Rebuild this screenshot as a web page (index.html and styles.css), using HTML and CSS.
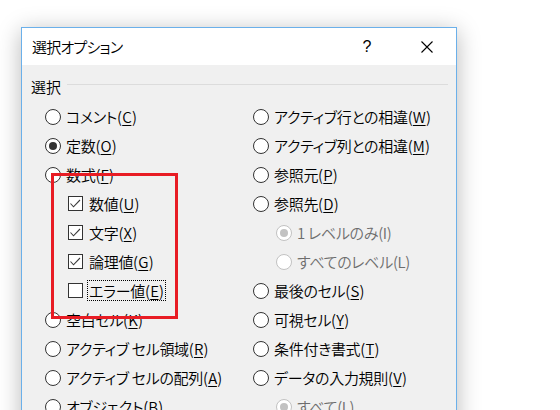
FILE: index.html
```html
<!DOCTYPE html>
<html lang="ja">
<head>
<meta charset="utf-8">
<title>選択オプション</title>
<link rel="stylesheet" href="styles.css">
</head>
<body>
<div class="screen">
  <div class="dialog">
    <div class="titlebar">
      <span class="title">選択オプション</span>
      <span class="help">?</span>
      <span class="close"><svg width="12" height="12" viewBox="0 0 12 12"><path d="M0.5 0.5 L11.5 11.5 M11.5 0.5 L0.5 11.5" stroke="#000" stroke-width="1.1" fill="none"/></svg></span>
    </div>
    <div class="content">
      <div class="group-head"><span class="group-label">選択</span><span class="rule"></span></div>
      <div class="columns">
        <div class="col">
          <div class="row"><span class="radio"></span><span class="label">コメント(<u>C</u>)</span></div>
          <div class="row"><span class="radio on"></span><span class="label">定数(<u>O</u>)</span></div>
          <div class="row"><span class="radio"></span><span class="label">数式(<u>F</u>)</span></div>
          <div class="row sub"><span class="check on"><svg width="13" height="13" viewBox="0 0 13 13"><path d="M1.5 6.5 L4.5 9.8 L11 3" stroke="#3c3c3c" stroke-width="1.1" fill="none"/></svg></span><span class="label">数値(<u>U</u>)</span></div>
          <div class="row sub"><span class="check on"><svg width="13" height="13" viewBox="0 0 13 13"><path d="M1.5 6.5 L4.5 9.8 L11 3" stroke="#3c3c3c" stroke-width="1.1" fill="none"/></svg></span><span class="label">文字(<u>X</u>)</span></div>
          <div class="row sub"><span class="check on"><svg width="13" height="13" viewBox="0 0 13 13"><path d="M1.5 6.5 L4.5 9.8 L11 3" stroke="#3c3c3c" stroke-width="1.1" fill="none"/></svg></span><span class="label">論理値(<u>G</u>)</span></div>
          <div class="row sub"><span class="check"></span><span class="label focus">エラー値(<u>E</u>)</span></div>
          <div class="row"><span class="radio"></span><span class="label">空白セル(<u>K</u>)</span></div>
          <div class="row"><span class="radio"></span><span class="label">アクティブ セル領域(<u>R</u>)</span></div>
          <div class="row"><span class="radio"></span><span class="label">アクティブ セルの配列(<u>A</u>)</span></div>
          <div class="row"><span class="radio"></span><span class="label">オブジェクト(<u>B</u>)</span></div>
        </div>
        <div class="col">
          <div class="row"><span class="radio"></span><span class="label">アクティブ行との相違(<u>W</u>)</span></div>
          <div class="row"><span class="radio"></span><span class="label">アクティブ列との相違(<u>M</u>)</span></div>
          <div class="row"><span class="radio"></span><span class="label">参照元(<u>P</u>)</span></div>
          <div class="row"><span class="radio"></span><span class="label">参照先(<u>D</u>)</span></div>
          <div class="row sub disabled"><span class="radio on"></span><span class="label">1 レベルのみ(I)</span></div>
          <div class="row sub disabled"><span class="radio"></span><span class="label">すべてのレベル(L)</span></div>
          <div class="row"><span class="radio"></span><span class="label">最後のセル(<u>S</u>)</span></div>
          <div class="row"><span class="radio"></span><span class="label">可視セル(<u>Y</u>)</span></div>
          <div class="row"><span class="radio"></span><span class="label">条件付き書式(<u>T</u>)</span></div>
          <div class="row"><span class="radio"></span><span class="label">データの入力規則(<u>V</u>)</span></div>
          <div class="row sub disabled"><span class="radio on"></span><span class="label">すべて(L)</span></div>
        </div>
      </div>
    </div>
  </div>
  <div class="annot"></div>
</div>
</body>
</html>
```
FILE: styles.css
```css
html, body {
  margin: 0;
  padding: 0;
  background: #fff;
  overflow: hidden;
}
body {
  font-family: "Noto Sans CJK JP", "Noto Sans", sans-serif;
  font-size: 15px;
  font-weight: 350;
  color: #000;
  font-feature-settings: "palt";
}
.screen {
  position: relative;
  width: 560px;
  height: 410px;
  overflow: hidden;
}
.dialog {
  box-sizing: border-box;
  width: 436px;
  height: 420px;
  margin-left: 21px;
  margin-top: 27px;
  border: 1px solid #6bb0ea;
  background: #f0f0f0;
  box-shadow: 0 4px 22px rgba(0, 0, 0, 0.28);
}
.titlebar {
  height: 37px;
  background: #fff;
  display: flex;
  align-items: center;
  padding-left: 10px;
  padding-right: 13px;
}
.title {
  flex: 1;
  line-height: 19px;
  letter-spacing: -0.8px;
}
.help {
  width: 30px;
  text-align: center;
  margin-right: 29px;
  font-family: "Liberation Sans", sans-serif;
  font-size: 16px;
  font-weight: 400;
}
.close {
  width: 32px;
  display: flex;
  justify-content: center;
}
.close svg {
  display: block;
}
.content {
  padding: 11px 8px 0 9px;
}
.group-head {
  display: flex;
  align-items: center;
  height: 20px;
}
.group-label {
  line-height: 19px;
  margin-right: 6px;
}
.rule {
  flex: 1;
  height: 1px;
  background: #dcdcdc;
  margin-top: -3px;
}
.columns {
  display: grid;
  grid-template-columns: 208px 1fr;
  margin-top: 6px;
  padding-left: 14px;
}
.row {
  height: 29px;
  display: flex;
  align-items: center;
}
.row.sub {
  padding-left: 23px;
}
.label {
  line-height: 19px;
  white-space: nowrap;
  letter-spacing: -0.3px;
}
.label u {
  text-decoration: underline;
  text-underline-offset: 2px;
  padding: 0 0.5px;
}
.radio {
  box-sizing: border-box;
  width: 16px;
  height: 16px;
  border: 1px solid #333;
  border-radius: 50%;
  background: #fff;
  margin-right: 5px;
  display: flex;
  align-items: center;
  justify-content: center;
  flex: none;
}
.radio.on::after {
  content: "";
  width: 8px;
  height: 8px;
  border-radius: 50%;
  background: #333;
}
.disabled .radio {
  border-color: #c2c2c2;
}
.disabled .radio.on::after {
  background: #c2c2c2;
}
.disabled .label {
  color: #6d6d6d;
}
.check {
  box-sizing: border-box;
  width: 15px;
  height: 15px;
  border: 1px solid #333;
  background: #fff;
  margin-right: 6px;
  flex: none;
}
.check svg {
  display: block;
}
.label.focus {
  border: 1px dotted #000;
  padding: 0 1px;
  margin-left: -2px;
}
.annot {
  position: absolute;
  left: 51px;
  top: 173px;
  width: 127px;
  height: 146px;
  box-sizing: border-box;
  border: 3px solid #e81c24;
}
```
